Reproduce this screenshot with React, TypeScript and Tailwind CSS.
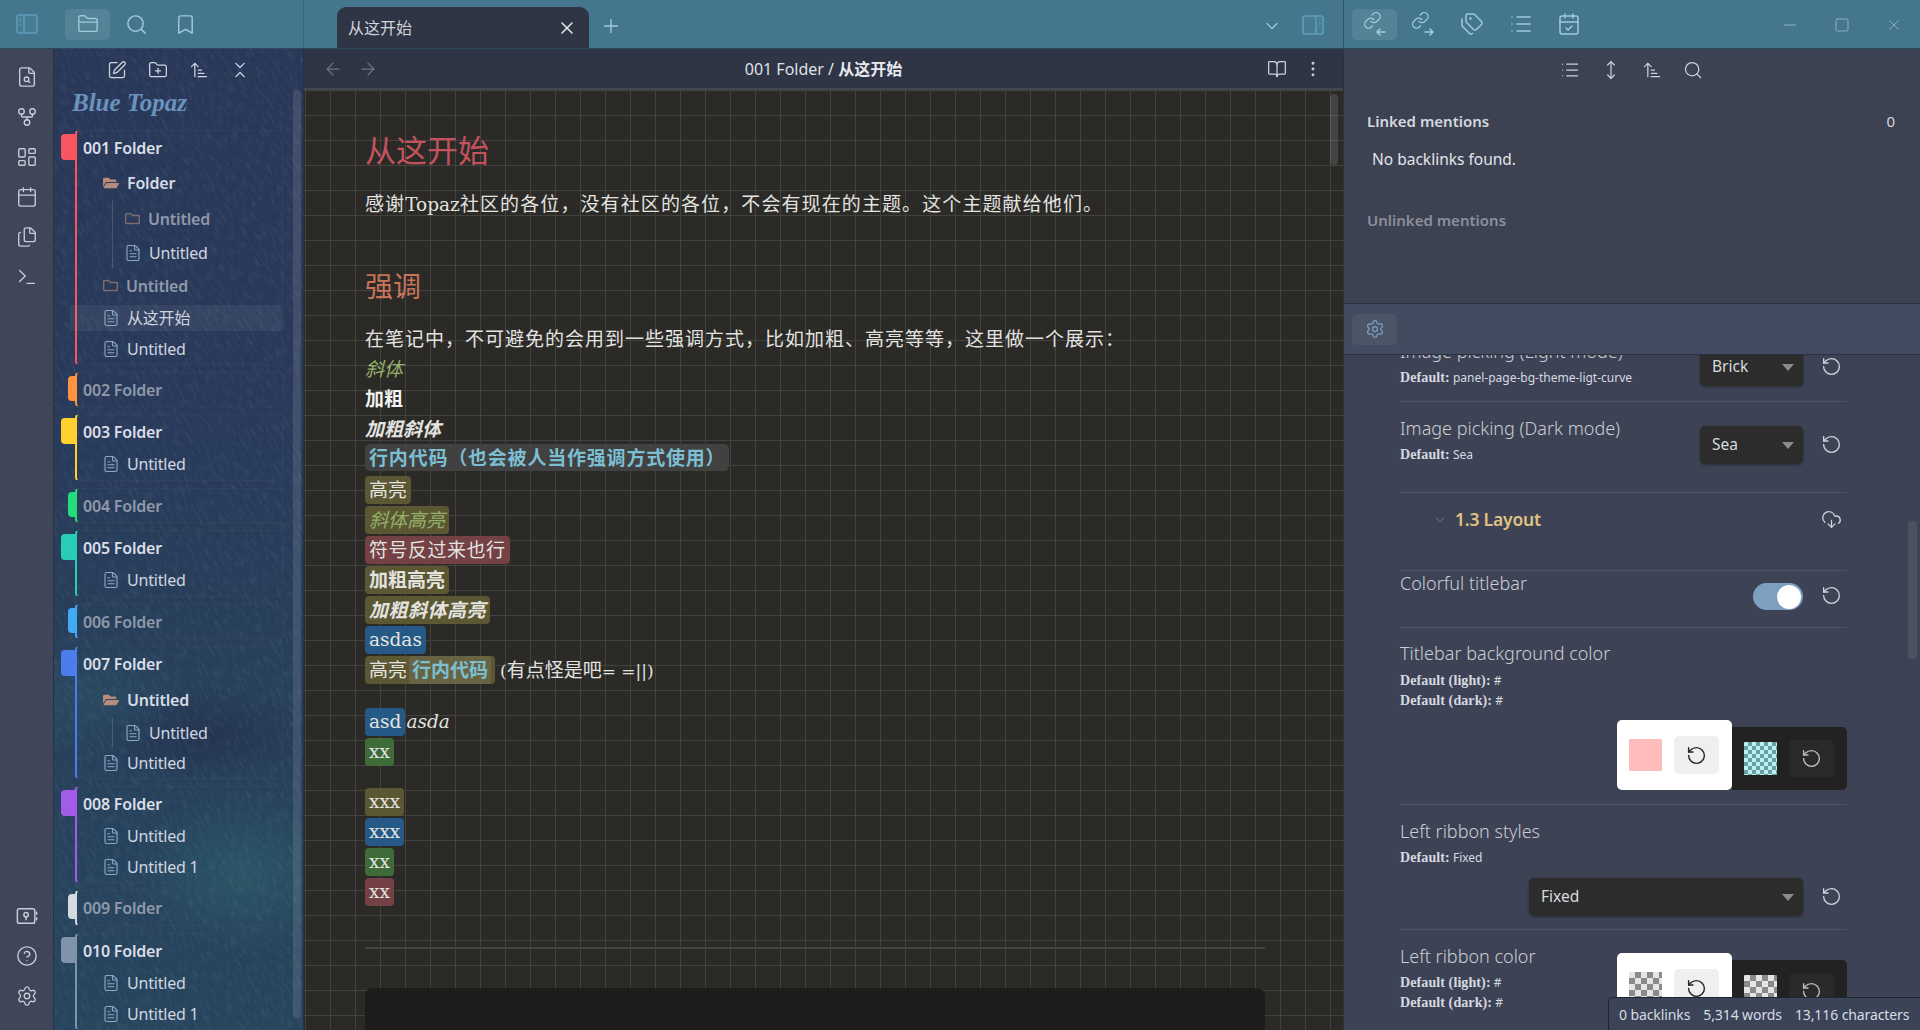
import type { ReactNode } from "react";
import {
  ArrowLeft,
  ArrowRight,
  ArrowUpNarrowWide,
  BookOpen,
  Bookmark,
  Calendar,
  CalendarCheck,
  ChevronDown,
  ChevronsDownUp,
  CircleHelp,
  CloudDownload,
  EllipsisVertical,
  FileSearch,
  FileText,
  Files,
  FolderClosed,
  FolderPlus,
  GitFork,
  LayoutDashboard,
  List,
  Minus,
  MoveVertical,
  Plus,
  RotateCcw,
  Search,
  Settings,
  Square,
  SquarePen,
  Tags,
  Terminal,
  X,
} from "lucide-react";
import { FaFolderOpen, FaRegFolder } from "react-icons/fa";

const SERIF = "font-['DejaVu_Serif','Noto_Sans_CJK_SC',serif]";

const SidebarIcon = ({ right = false }: { right?: boolean }) => (
  <svg width="24" height="24" viewBox="0 0 24 24" fill="none" stroke="#5f9dbb" strokeWidth="1.6">
    <rect x="2" y="3" width="20" height="18" rx="2" fill="#5f9dbb" fillOpacity="0.14" />
    <path d={right ? "M15 3v18M18 7h1.5M18 10h1.5M18 13h1.5" : "M9 3v18M4.5 7H6M4.5 10H6M4.5 13H6"} />
  </svg>
);

const LinkIcon = ({ out = false }: { out?: boolean }) => (
  <svg width="24" height="24" viewBox="0 0 24 24" fill="none" stroke="#9fcbdc" strokeWidth="1.6" strokeLinecap="round" strokeLinejoin="round">
    <g transform="translate(0 -1) scale(0.78)">
      <path d="M10 13a5 5 0 0 0 7.54.54l3-3a5 5 0 0 0-7.07-7.07l-1.72 1.71" />
      <path d="M14 11a5 5 0 0 0-7.54-.54l-3 3a5 5 0 0 0 7.07 7.07l1.71-1.71" />
    </g>
    <path d={out ? "M14 20h8M19 17l3 3-3 3" : "M14 20h8M17 17l-3 3 3 3"} />
  </svg>
);

const VaultIcon = () => (
  <svg width="22" height="22" viewBox="0 0 24 24" fill="none" stroke="#c5ccd6" strokeWidth="1.6" strokeLinecap="round">
    <rect x="1.5" y="4" width="19" height="16" rx="2" />
    <circle cx="11" cy="10.5" r="2.4" />
    <path d="M11 13v3M22.5 8v2M22.5 14v2" />
  </svg>
);

// scratched paper look of the sidebar wallpaper
const Scratches = () => (
  <svg className="absolute inset-0 h-full w-full opacity-[0.13]" xmlns="http://www.w3.org/2000/svg">
    <filter id="scratch">
      <feTurbulence type="fractalNoise" baseFrequency="0.35 0.09" numOctaves="3" seed="7" />
      <feColorMatrix values="0 0 0 0 0.55  0 0 0 0 0.65  0 0 0 0 0.8  0 0 0 1.6 -0.75" />
    </filter>
    <rect x="-300" y="-300" width="900" height="1600" filter="url(#scratch)" transform="rotate(-28 125 490)" />
  </svg>
);

const RibbonButton = ({ children }: { children: ReactNode }) => (
  <div className="flex h-[40px] w-[54px] items-center justify-center text-[#c5ccd6]">{children}</div>
);

const FileRow = ({ label, pad = "pl-[25px]", height = "h-[32px]" }: { label: string; pad?: string; height?: string }) => (
  <div className={`flex items-center gap-[7px] text-[16px] tracking-[-0.2px] text-[#cfd6e0] ${pad} ${height}`}>
    <FileText size={18} strokeWidth={1.5} className="shrink-0 text-[#8aa8c4]" />
    <span>{label}</span>
  </div>
);

const FolderRow = ({ label, pad = "pl-[26px]", height = "h-[35px]" }: { label: string; pad?: string; height?: string }) => (
  <div className={`flex items-center gap-[8px] text-[16px] font-semibold tracking-[-0.2px] text-[#d5dbe5] ${pad} ${height}`}>
    <FaFolderOpen size={16} className="shrink-0 text-[#b88c7c]" />
    <span>{label}</span>
  </div>
);

const ClosedFolderRow = ({ label, pad = "pl-[26px]", height = "h-[35px]" }: { label: string; pad?: string; height?: string }) => (
  <div className={`flex items-center gap-[8px] text-[16px] font-semibold tracking-[-0.2px] text-[#8f99a9] ${pad} ${height}`}>
    <FaRegFolder size={15} className="shrink-0 text-[#7d6e70]" />
    <span>{label}</span>
  </div>
);

// one coloured folder box of the sidebar
const Group = ({
  name,
  line,
  tab,
  open = true,
  titleH = "h-[33px]",
  children,
}: {
  name: string;
  line: string;
  tab: string;
  open?: boolean;
  titleH?: string;
  children?: ReactNode;
}) => (
  <div className={`relative w-[208px] rounded-[4px] border border-l-2 border-[#55555544] ${line}`}>
    <div
      className={`absolute top-[3px] rounded-l-[4px] ${tab} ${
        open ? "left-[-16px] h-[26px] w-[14px]" : "left-[-9px] h-[25px] w-[7px]"
      }`}
    />
    <div
      className={`flex items-center pl-[6px] text-[16px] font-semibold tracking-[-0.2px] ${titleH} ${
        open ? "text-[#d9dee7]" : "text-[#8f99a9]"
      }`}
    >
      {name}
    </div>
    {children}
  </div>
);

const Sidebar = () => (
  <div className="relative h-full w-[250px] shrink-0 overflow-hidden border-r border-[#2a3040] bg-[radial-gradient(ellipse_110px_80px_at_75%_84%,#2a5567,transparent),radial-gradient(ellipse_110px_60px_at_10%_66%,#2a4a62,transparent),radial-gradient(ellipse_120px_50px_at_60%_70%,#243450,transparent),linear-gradient(180deg,#293858_0%,#29395a_35%,#273f5b_60%,#27455e_100%)]">
    <Scratches />
    <div className="relative flex h-[41px] items-center pl-[42px] text-[#d0d6df]">
      <div className="flex w-[41px] justify-center"><SquarePen size={20} strokeWidth={1.5} /></div>
      <div className="flex w-[41px] justify-center"><FolderPlus size={20} strokeWidth={1.5} /></div>
      <div className="flex w-[41px] justify-center"><ArrowUpNarrowWide size={20} strokeWidth={1.5} /></div>
      <div className="flex w-[41px] justify-center"><ChevronsDownUp size={20} strokeWidth={1.5} /></div>
    </div>
    <div className="relative flex h-[40px] items-center pb-[14px] pl-[18px] font-['Liberation_Serif',serif] text-[25px] font-bold italic text-[#6a93bd]">
      Blue Topaz
    </div>
    <div className="relative flex flex-col gap-[7px] pl-[21px]">
      <Group name="001 Folder" line="border-l-[#f9545f]" tab="bg-[#f9545f]" titleH="h-[34px]">
        <FolderRow label="Folder" />
        <div className="ml-[35px] flex flex-col border-l border-[#ffffff26]">
          <ClosedFolderRow label="Untitled" pad="pl-[12px]" height="h-[37px]" />
          <FileRow label="Untitled" pad="pl-[11px]" height="h-[31px]" />
        </div>
        <ClosedFolderRow label="Untitled" />
        <div className="relative">
          <div className="absolute inset-y-[2px] left-[-7px] right-0 bg-[#ffffff0f]" />
          <div className="relative"><FileRow label="从这开始" height="h-[30px]" /></div>
        </div>
        <FileRow label="Untitled" height="h-[31px]" />
      </Group>
      <Group name="002 Folder" line="border-l-[#ff9340]" tab="bg-[#ff9340]" open={false} />
      <Group name="003 Folder" line="border-l-[#ffd02e]" tab="bg-[#ffd02e]">
        <FileRow label="Untitled" />
      </Group>
      <Group name="004 Folder" line="border-l-[#22dd7a]" tab="bg-[#22dd7a]" open={false} />
      <Group name="005 Folder" line="border-l-[#27cdb4]" tab="bg-[#27cdb4]">
        <FileRow label="Untitled" />
      </Group>
      <Group name="006 Folder" line="border-l-[#40aaf5]" tab="bg-[#40aaf5]" open={false} />
      <Group name="007 Folder" line="border-l-[#4c7ded]" tab="bg-[#4c7ded]" titleH="h-[34px]">
        <FolderRow label="Untitled" height="h-[37px]" />
        <div className="ml-[35px] flex flex-col border-l border-[#ffffff26]">
          <FileRow label="Untitled" pad="pl-[11px]" height="h-[29px]" />
        </div>
        <FileRow label="Untitled" height="h-[31px]" />
      </Group>
      <Group name="008 Folder" line="border-l-[#a45ce8]" tab="bg-[#a45ce8]">
        <FileRow label="Untitled" height="h-[31px]" />
        <FileRow label="Untitled 1" height="h-[31px]" />
      </Group>
      <Group name="009 Folder" line="border-l-[#d3dae2]" tab="bg-[#d3dae2]" open={false} titleH="h-[34px]" />
      <Group name="010 Folder" line="border-l-[#7f93aa]" tab="bg-[#7f93aa]">
        <FileRow label="Untitled" height="h-[31px]" />
        <FileRow label="Untitled 1" height="h-[31px]" />
      </Group>
    </div>
    <div className="absolute left-[239px] top-[41px] h-[928px] w-[8px] rounded-[4px] bg-[#ffffff1c]" />
  </div>
);

const Mark = ({ className, children }: { className: string; children: ReactNode }) => (
  <span className={`inline-flex h-[28px] items-center rounded-[4px] px-[4px] ${className}`}>{children}</span>
);

const Editor = () => (
  <div className="flex h-full w-[1039px] shrink-0 flex-col bg-[#2f3544]">
    <div className="relative flex h-[41px] shrink-0 items-center justify-center border-b-2 border-[#424650] text-[16px] text-[#dde1e8]">
      <div className="absolute left-[19px] top-[10px] flex gap-[15px] text-[#6d7480]">
        <ArrowLeft size={20} strokeWidth={1.5} />
        <ArrowRight size={20} strokeWidth={1.5} />
      </div>
      <span>
        001 Folder / <span className="font-semibold text-[#e6e9ee]">从这开始</span>
      </span>
      <div className="absolute right-[20px] top-[10px] flex gap-[16px] text-[#cfd4dc]">
        <BookOpen size={20} strokeWidth={1.5} />
        <EllipsisVertical size={20} strokeWidth={1.5} />
      </div>
    </div>
    <div
      className={`relative flex-1 overflow-hidden bg-[#2b2a27] bg-[linear-gradient(to_right,#42423f_1px,transparent_1px),linear-gradient(to_bottom,#42423f_1px,transparent_1px)] bg-size-[25px_25px] bg-position-[1px_0px] pl-[61px] pt-[41px] text-[19px] leading-[30px] text-[#e3e3e0] ${SERIF}`}
    >
      <div className="h-[40px] text-[31px] leading-[40px] text-[#c2535d]">从这开始</div>
      <p className="mt-[18px] h-[30px] tracking-[1.1px]">
        感谢<span className="text-[18.5px] tracking-normal">Topaz</span>
        {"社区的各位\uFF0C没有社区的各位\uFF0C不会有现在的主题。这个主题献给他们。"}
      </p>
      <div className="mt-[51px] h-[36px] text-[28px] leading-[36px] text-[#c9735a]">强调</div>
      <p className="mt-[18px] h-[30px] tracking-[1px]">
        {"在笔记中\uFF0C不可避免的会用到一些强调方式\uFF0C比如加粗、高亮等等\uFF0C这里做一个展示\uFF1A"}
      </p>
      <p className="h-[30px] italic text-[#94b06a]">斜体</p>
      <p className="h-[30px] font-bold text-[#f2f2f0]">加粗</p>
      <p className="h-[30px] font-bold italic">加粗斜体</p>
      <div className="flex h-[32px] items-start">
        <span className="flex h-[27px] items-center rounded-[5px] bg-[#414141] px-[4px] font-bold tracking-[0.8px] text-[#7cbfd2]">
          {"行内代码\uFF08也会被人当作强调方式使用\uFF09"}
        </span>
      </div>
      <div className="flex h-[30px]"><Mark className="bg-[#5c5733]">高亮</Mark></div>
      <div className="flex h-[30px] italic"><Mark className="bg-[#5c5733] text-[#94b06a]">斜体高亮</Mark></div>
      <div className="flex h-[30px] tracking-[0.5px]"><Mark className="bg-[#744245]">符号反过来也行</Mark></div>
      <div className="flex h-[30px] font-bold"><Mark className="bg-[#5c5733]">加粗高亮</Mark></div>
      <div className="flex h-[30px] font-bold italic tracking-[0.5px]"><Mark className="bg-[#5c5733]">加粗斜体高亮</Mark></div>
      <div className="flex h-[30px] text-[18.5px]"><Mark className="bg-[#245a85]">asdas</Mark></div>
      <div className="flex h-[30px] items-start">
        <Mark className="bg-[#5c5733]">
          高亮
          <span className="ml-[2px] flex h-[28px] items-center rounded-[4px] bg-[#ffffff14] px-[3px] font-bold text-[#7cbfd2]">行内代码</span>
        </Mark>
        <span className="ml-[5px] h-[28px] leading-[28px]">
          <span className="text-[17px]">(</span>有点怪是吧<span className="text-[17px]">= =||)</span>
        </span>
      </div>
      <div className="mt-[22px] flex h-[30px] items-start text-[18.5px]">
        <Mark className="bg-[#245a85]">asd</Mark>
        <span className="h-[28px] pl-[1px] leading-[28px] italic">asda</span>
      </div>
      <div className="flex h-[30px] text-[18.5px]"><Mark className="bg-[#3f6b38] px-[3px]">xx</Mark></div>
      <div className="mt-[20px] flex h-[30px] text-[18.5px]"><Mark className="bg-[#5c5733] px-[3px]">xxx</Mark></div>
      <div className="flex h-[30px] text-[18.5px]"><Mark className="bg-[#245a85]">xxx</Mark></div>
      <div className="flex h-[30px] text-[18.5px]"><Mark className="bg-[#3f6b38] px-[3px]">xx</Mark></div>
      <div className="flex h-[30px] text-[18.5px]"><Mark className="bg-[#744245] px-[3px]">xx</Mark></div>
      <div className="mt-[39px] h-[2px] w-[900px] bg-[#45443f]" />
      <div className="mt-[39px] h-[60px] w-[900px] rounded-t-[8px] bg-[#1c1b1a]/90" />
      <div className="absolute right-[5px] top-[4px] h-[71px] w-[8px] rounded-[4px] bg-[#ffffff1f]" />
    </div>
  </div>
);

const Hint = ({ label, value }: { label: string; value: string }) => (
  <div className="h-[20px] whitespace-nowrap text-[12px] leading-[20px] text-[#d6dae1]">
    <span className="font-['Liberation_Serif',serif] text-[14px] font-bold tracking-[0.1px]">{label}</span> {value}
  </div>
);

const Select = ({ label, width }: { label: string; width: string }) => (
  <div className={`flex h-[38px] items-center justify-between rounded-[5px] bg-[#2c2c2c] pl-[12px] pr-[9px] text-[15.5px] text-[#d8dade] shadow-[0_1px_3px_#00000059] ${width}`}>
    <span>{label}</span>
    <span className="h-0 w-0 border-x-[6px] border-t-[7px] border-x-transparent border-t-[#8b8b8b]" />
  </div>
);

const Reset = () => <RotateCcw size={21} strokeWidth={1.5} className="mb-[2px] shrink-0 text-[#cfd3da]" />;

const Title = ({ children, className = "" }: { children: ReactNode; className?: string }) => (
  <div className={`h-[26px] text-[18px] font-light leading-[26px] text-[#c9cdd5] ${className}`}>{children}</div>
);

// pair of light / dark colour pickers
const Pickers = ({ light, dark }: { light: string; dark: string }) => (
  <div className="flex items-end">
    <div className="flex h-[70px] w-[115px] items-center gap-[12px] rounded-[5px] bg-white pl-[12px]">
      <div className={`h-[32px] w-[33px] rounded-[1px] ${light}`} />
      <div className="flex h-[38px] w-[45px] items-center justify-center rounded-[5px] bg-[#efefef] text-[#222]">
        <RotateCcw size={21} strokeWidth={1.6} />
      </div>
    </div>
    <div className="flex h-[63px] w-[115px] items-center gap-[12px] rounded-r-[5px] bg-[#222222] pl-[12px]">
      <div className={`h-[33px] w-[33px] rounded-[1px] ${dark}`} />
      <div className="flex h-[37px] w-[45px] items-center justify-center rounded-[5px] bg-[#2a2a2a] text-[#b9bcc2]">
        <RotateCcw size={21} strokeWidth={1.6} />
      </div>
    </div>
  </div>
);

const SettingsPane = () => (
  <div className="relative flex-1 overflow-hidden bg-[#3d4354] pl-[56px]">
    <div className="mt-[-31px] flex w-[447px] flex-col">
      <div className="flex h-[77px] justify-between pt-[14px]">
        <div>
          <Title className="mb-[4px]">Image picking (Light mode)</Title>
          <Hint label="Default:" value="panel-page-bg-theme-ligt-curve" />
        </div>
        <div className="mr-[5px] mt-[10px] flex items-center gap-[18px] self-start">
          <Select label="Brick" width="w-[103px]" />
          <Reset />
        </div>
      </div>
      <div className="flex h-[91px] justify-between border-t border-[#4d5468] pt-[13px]">
        <div>
          <Title className="mb-[4px]">Image picking (Dark mode)</Title>
          <Hint label="Default:" value="Sea" />
        </div>
        <div className="mr-[5px] mt-[11px] flex items-center gap-[18px] self-start">
          <Select label="Sea" width="w-[103px]" />
          <Reset />
        </div>
      </div>
      <div className="flex h-[78px] items-center border-t border-[#4d5468] pb-[24px] pr-[5px]">
        <ChevronDown size={14} strokeWidth={1.2} className="ml-[33px] text-[#7f9bb5]" />
        <span className="ml-[8px] flex-1 text-[17.5px] font-semibold tracking-[-0.2px] text-[#e0c283]">1.3 Layout</span>
        <CloudDownload size={21} strokeWidth={1.5} className="text-[#cfd3da]" />
      </div>
      <div className="flex h-[57px] justify-between border-t border-[#4d5468]">
        <Title className="mt-[-1px]">Colorful titlebar</Title>
        <div className="mr-[5px] mt-[12px] flex items-center gap-[18px] self-start">
          <div className="flex h-[27px] w-[50px] items-center justify-end rounded-full bg-[#7d9fc0] pr-[2px]">
            <div className="h-[24px] w-[24px] rounded-full bg-white" />
          </div>
          <Reset />
        </div>
      </div>
      <div className="h-[177px] border-t border-[#4d5468] pt-[12px]">
        <Title className="mb-[5px]">Titlebar background color</Title>
        <Hint label="Default (light):" value="#" />
        <Hint label="Default (dark):" value="#" />
        <div className="mt-[9px] flex justify-end">
          <Pickers light="bg-[#ffbcbc]" dark="bg-[conic-gradient(#6f9ca0_25%,#b5f2f2_0_50%,#6f9ca0_0_75%,#b5f2f2_0)] bg-size-[8px_8px]" />
        </div>
      </div>
      <div className="h-[125px] border-t border-[#4d5468] pt-[13px]">
        <Title className="mb-[4px]">Left ribbon styles</Title>
        <Hint label="Default:" value="Fixed" />
        <div className="mr-[5px] mt-[10px] flex items-center justify-end gap-[18px]">
          <Select label="Fixed" width="w-[274px]" />
          <Reset />
        </div>
      </div>
      <div className="flex justify-between border-t border-[#4d5468] pt-[13px]">
        <div>
          <Title className="mb-[4px]">Left ribbon color</Title>
          <Hint label="Default (light):" value="#" />
          <Hint label="Default (dark):" value="#" />
        </div>
        <div className="mt-[10px]">
          <Pickers
            light="bg-[conic-gradient(#8a8a8a_25%,#e4e4e4_0_50%,#8a8a8a_0_75%,#e4e4e4_0)] bg-size-[12px_12px]"
            dark="bg-[conic-gradient(#8a8a8a_25%,#e4e4e4_0_50%,#8a8a8a_0_75%,#e4e4e4_0)] bg-size-[12px_12px]"
          />
        </div>
      </div>
    </div>
    <div className="absolute right-[3px] top-[166px] h-[138px] w-[9px] rounded-[4px] bg-[#ffffff14]" />
  </div>
);

const RightPanel = () => (
  <div className="flex h-full flex-1 flex-col border-l border-[#2c3140] bg-[#3c4252]">
    <div className="h-[255px] shrink-0 border-b border-[#2c3140]">
      <div className="flex h-[41px] items-center pl-[205px] text-[#ced2d9]">
        <div className="flex w-[41px] justify-center"><List size={20} strokeWidth={1.5} /></div>
        <div className="flex w-[41px] justify-center"><MoveVertical size={20} strokeWidth={1.5} /></div>
        <div className="flex w-[41px] justify-center"><ArrowUpNarrowWide size={20} strokeWidth={1.5} /></div>
        <div className="flex w-[41px] justify-center"><Search size={20} strokeWidth={1.5} /></div>
      </div>
      <div className="flex justify-between pl-[23px] pr-[25px] pt-[20px] text-[15px] font-semibold text-[#d5d8de]">
        <span>Linked mentions</span>
        <span className="font-normal">0</span>
      </div>
      <div className="pl-[28px] pt-[15px] text-[15.5px] text-[#e2e4e9]">No backlinks found.</div>
      <div className="pl-[23px] pt-[38px] text-[15px] font-semibold text-[#8b909c]">Unlinked mentions</div>
    </div>
    <div className="flex h-[51px] shrink-0 items-center border-b border-[#2c3140] bg-[#434b60] pl-[8px]">
      <div className="flex h-[31px] w-[45px] items-center justify-center rounded-[5px] bg-[#ffffff0d]">
        <Settings size={20} strokeWidth={1.5} className="text-[#7ea3c5]" />
      </div>
    </div>
    <SettingsPane />
  </div>
);

const TopBar = () => (
  <div className="flex h-[49px] shrink-0 border-b border-[#2d4a5c] bg-[#44778e] text-[#9fcbdc]">
    <div className="flex w-[304px] shrink-0 items-center border-r border-[#3a6276] pl-[15px]">
      <SidebarIcon />
      <div className="ml-[26px] flex h-[31px] w-[45px] items-center justify-center rounded-[5px] bg-[#ffffff17]">
        <FolderClosed size={22} strokeWidth={1.5} />
      </div>
      <div className="ml-[15px]"><Search size={23} strokeWidth={1.5} /></div>
      <div className="ml-[26px]"><Bookmark size={23} strokeWidth={1.5} /></div>
    </div>
    <div className="flex w-[1039px] shrink-0 items-end pl-[33px]">
      <div className="flex h-[41px] w-[252px] items-center justify-between rounded-t-[9px] bg-[#2f3544] pl-[11px] pr-[12px] text-[16px] text-[#d0d4db]">
        <span>从这开始</span>
        <X size={20} strokeWidth={1.8} className="text-[#e6e8ec]" />
      </div>
      <div className="mb-[11px] ml-[11px]"><Plus size={22} strokeWidth={1.5} /></div>
      <div className="flex-1" />
      <div className="mb-[12px] mr-[19px]"><ChevronDown size={20} strokeWidth={1.4} /></div>
      <div className="mb-[11px] mr-[18px]"><SidebarIcon right /></div>
    </div>
    <div className="flex flex-1 items-center border-l border-[#2f5162] pl-[8px]">
      <div className="flex h-[31px] w-[45px] items-center justify-center rounded-[5px] bg-[#ffffff17]">
        <LinkIcon />
      </div>
      <div className="ml-[14px]"><LinkIcon out /></div>
      <div className="ml-[25px]"><Tags size={24} strokeWidth={1.5} /></div>
      <div className="ml-[25px]"><List size={24} strokeWidth={1.5} /></div>
      <div className="ml-[24px]"><CalendarCheck size={24} strokeWidth={1.5} /></div>
      <div className="flex-1" />
      <div className="mt-[1px] flex items-center gap-[35px] pr-[17px] text-[#8fb3c6]">
        <Minus size={18} strokeWidth={1.4} />
        <Square size={16} strokeWidth={1.4} />
        <X size={18} strokeWidth={1.2} />
      </div>
    </div>
  </div>
);

export default function App() {
  return (
    <div className="relative flex h-[1030px] w-[1920px] flex-col overflow-hidden font-['Noto_Sans','Noto_Sans_CJK_SC',sans-serif]">
      <TopBar />
      <div className="flex min-h-0 flex-1">
        <div className="flex h-full w-[54px] shrink-0 flex-col justify-between border-r border-[#2c3140] bg-[#3f4659] pb-[14px] pt-[8px]">
          <div>
            <RibbonButton><FileSearch size={22} strokeWidth={1.5} /></RibbonButton>
            <RibbonButton><GitFork size={22} strokeWidth={1.5} /></RibbonButton>
            <RibbonButton><LayoutDashboard size={22} strokeWidth={1.5} /></RibbonButton>
            <RibbonButton><Calendar size={22} strokeWidth={1.5} /></RibbonButton>
            <RibbonButton><Files size={22} strokeWidth={1.5} /></RibbonButton>
            <RibbonButton><Terminal size={22} strokeWidth={1.5} /></RibbonButton>
          </div>
          <div>
            <RibbonButton><VaultIcon /></RibbonButton>
            <RibbonButton><CircleHelp size={22} strokeWidth={1.5} /></RibbonButton>
            <RibbonButton><Settings size={22} strokeWidth={1.5} /></RibbonButton>
          </div>
        </div>
        <Sidebar />
        <Editor />
        <RightPanel />
      </div>
      <div className="absolute bottom-0 right-0 flex h-[33px] w-[312px] items-center gap-[13px] whitespace-nowrap rounded-tl-[5px] border-l border-t border-[#1f2430] bg-[#3b4356] pl-[10px] text-[14px] tracking-[-0.1px] text-[#d8dce4]">
        <span>0 backlinks</span>
        <span>5,314 words</span>
        <span>13,116 characters</span>
      </div>
    </div>
  );
}
